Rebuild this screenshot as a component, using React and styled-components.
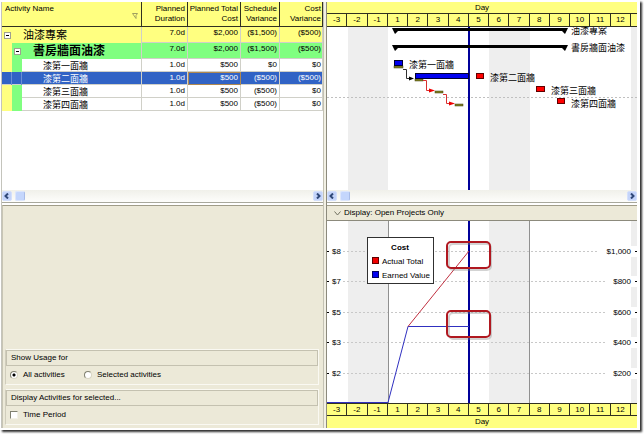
import * as React from 'react';
import styled, { createGlobalStyle } from "styled-components";

const days = ['-3', '-2', '-1', '1', '2', '3', '4', '5', '6', '7', '8', '9', '10', '11', '12'];

const activities = [
    { name: '油漆專案', level: 0, duration: '7.0d', cost: '$2,000', schedule: '($1,500)', variance: '($500)' },
    { name: '書房牆面油漆', level: 1, duration: '7.0d', cost: '$2,000', schedule: '($1,500)', variance: '($500)' },
    { name: '漆第一面牆', level: 2, duration: '1.0d', cost: '$500', schedule: '$0', variance: '$0' },
    { name: '漆第二面牆', level: 2, duration: '1.0d', cost: '$500', schedule: '($500)', variance: '($500)', selected: true },
    { name: '漆第三面牆', level: 2, duration: '1.0d', cost: '$500', schedule: '($500)', variance: '$0' },
    { name: '漆第四面牆', level: 2, duration: '1.0d', cost: '$500', schedule: '($500)', variance: '$0' },
];

const levels = [
    { height: 16, background: '#ffff80', size: 11, weight: 400, gap: 12 },
    { height: 16, background: '#80ff80', size: 12, weight: 700, gap: 12 },
    { height: 13, background: '#ffffff', size: 9, weight: 400, gap: 21 },
];

const grid = [
    { y: 30, left: '$8', right: '$1,000' },
    { y: 60, left: '$7', right: '$800' },
    { y: 91, left: '$5', right: '$600' },
    { y: 121, left: '$3', right: '$400' },
    { y: 152, left: '$2', right: '$200' },
];

const App = () => {
    return (
        <>
        <GlobalStyle />
        <Frame>
            <Window>
                <ActivityPane />
                <Splitter />
                <GanttPane />
                <UsagePane />
                <Splitter />
                <CostPane />
            </Window>
        </Frame>
        </>
    )
}

const ActivityPane = () => {
    return (
        <TopPane>
            <Table>
                <colgroup>
                    <col />
                    <Col $width={46} />
                    <Col $width={53} />
                    <Col $width={39} />
                    <Col $width={43} />
                </colgroup>
                <thead>
                    <tr>
                        <Th $left>
                            <HeadLine>
                                Activity Name
                                <FilterIcon viewBox="0 0 6 6"><path d="M.5.5h5L4 2.5V5.5z" /></FilterIcon>
                            </HeadLine>
                        </Th>
                        <Th>Planned Duration</Th>
                        <Th>Planned Total Cost</Th>
                        <Th>Schedule Variance</Th>
                        <Th>Cost Variance</Th>
                    </tr>
                </thead>
                <tbody>
                    {activities.map((a) => {
                        const level = levels[a.level];
                        return (
                            <Row key={a.name} $level={level} $selected={a.selected}>
                                <NameCell>
                                    <NameBox $height={level.height} $line={a.level > 1}>
                                        {a.level > 0 ? <Strip $color="#ffff80" $selected={a.selected} /> : null}
                                        {a.level > 1 ? <Strip $color="#80ff80" $selected={a.selected} /> : null}
                                        {a.level < 2 ? <Toggle aria-label="collapse"><i /></Toggle> : null}
                                        <Name $level={level}>{a.name}</Name>
                                    </NameBox>
                                </NameCell>
                                <Td>{a.duration}</Td>
                                <Td $focus={a.selected}>{a.cost}</Td>
                                <Td>{a.schedule}</Td>
                                <Td>{a.variance}</Td>
                            </Row>
                        )
                    })}
                </tbody>
            </Table>
            <ScrollBar />
        </TopPane>
    )
}

const ScrollBar = () => {
    return (
        <Track>
            <ScrollButton aria-label="scroll left"><svg viewBox="0 0 6 6"><path d="M4 .5L1.5 3 4 5.5" /></svg></ScrollButton>
            <Thumb />
            <ScrollButton aria-label="scroll right"><svg viewBox="0 0 6 6"><path d="M2 .5L4.500 3 2 5.5" /></svg></ScrollButton>
        </Track>
    )
}

const DayCells = () => {
    return (
        <Days>
            {days.map((d) => <Day key={d}>{d}</Day>)}
            <span />
        </Days>
    )
}

const GanttPane = () => {
    return (
        <TopPane>
            <AxisTitle $line="bottom">Day</AxisTitle>
            <DayCells />
            <Drawing viewBox="0 0 310 163">
                <Bands height={163} />
                <path d="M0 70.5H310" stroke="#c0c0c0" strokeDasharray="2 2" />
                <rect x="141" width="2" height="163" fill="#00009a" />

                {/* summary bars */}
                <path d="M65 1H241L238 7L235 4H71L68 7z" />
                <path d="M65 18H241L238 24L235 21H71L68 24z" />
                <text x="244" y="7">油漆專案</text>
                <text x="244" y="24">書房牆面油漆</text>

                {/* planned bars */}
                <g fill="#808020" stroke="#404010" strokeWidth=".5">
                    <rect x="67" y="39" width="9" height="2" />
                    <rect x="88" y="52" width="8" height="2" />
                    <rect x="108" y="64" width="8" height="2" />
                    <rect x="128" y="77" width="8" height="2" />
                </g>

                {/* actual bars */}
                <g fill="#0000f0" stroke="#000030">
                    <rect x="67.500" y="33.500" width="8" height="5" />
                    <rect x="88.500" y="46.500" width="53" height="5" />
                </g>
                <g fill="#ff0000" stroke="#600000">
                    <rect x="149.500" y="46.500" width="7" height="5" />
                    <rect x="209.500" y="59.500" width="8" height="5" />
                    <rect x="230.500" y="71.500" width="7" height="5" />
                </g>

                {/* links */}
                <path d="M76 42.500H79.500V51.500H83" fill="none" stroke="#303030" />
                <path d="M82 49.500L87 51.500L82 53.500z" />
                <g fill="none" stroke="#d83030">
                    <path d="M96 53.500H99.500V63.500H104" />
                    <path d="M116 67.500H119.500V76.500H124" />
                </g>
                <g fill="#f00000">
                    <path d="M102 61.500L108 63.500L102 65.500z" />
                    <path d="M122 74.500L128 76.500L122 78.500z" />
                </g>

                <text x="82" y="41">漆第一面牆</text>
                <text x="163" y="54">漆第二面牆</text>
                <text x="224" y="67">漆第三面牆</text>
                <text x="244" y="80">漆第四面牆</text>
            </Drawing>
            <ScrollBar />
        </TopPane>
    )
}

const Bands = ({ height }) => {
    return (
        <g fill="#eeeeee">
            <rect x="21" width="40" height={height} />
            <rect x="162" width="41" height={height} />
            <rect x="304" width="6" height={height} />
        </g>
    )
}

const UsagePane = () => {
    return (
        <BottomPane>
            <Group>
                <GroupTitle>Show Usage for</GroupTitle>
                <Options>
                    <Label $width={74}><Radio type="radio" name="usage" defaultChecked />All activities</Label>
                    <Label><Radio type="radio" name="usage" />Selected activities</Label>
                </Options>
            </Group>
            <Group>
                <GroupTitle>Display Activities for selected...</GroupTitle>
                <Options>
                    <Label><Check type="checkbox" />Time Period</Label>
                </Options>
            </Group>
        </BottomPane>
    )
}

const CostPane = () => {
    return (
        <ChartPane>
            <DisplayBar>
                <svg viewBox="0 0 7 5"><path d="M.5.5L3.500 4L6.500.5" /></svg>
                Display: Open Projects Only
            </DisplayBar>
            <Drawing viewBox="0 0 310 182">
                <Bands height={182} />
                {grid.map((g) => (
                    <g key={g.left}>
                        <path d={`M16 ${g.y}.5H304`} stroke="#c8c8c8" strokeDasharray="2 2" />
                        <rect x={g.y > 30 ? 278 : 272} y={g.y - 5} width={g.y > 30 ? 32 : 38} height="11" fill="#ffffff" />
                        <path d={`M0 ${g.y}.5H2M308 ${g.y}.5H310`} stroke="#000000" />
                        <text x="5" y={g.y + 3}>{g.left}</text>
                        <text x="304" y={g.y + 3} textAnchor="end">{g.right}</text>
                    </g>
                ))}
                <path d="M61.500 0V182M202.500 0V182" stroke="#909090" />
                <rect x="141" width="2" height="182" fill="#00009a" />
                <path d="M0 181.500H61L81 105.500H142" fill="none" stroke="#3030c0" />
                <path d="M81 105.500L142 30" fill="none" stroke="#c03040" />

                <rect x="40.500" y="16.500" width="66" height="46" fill="#ffffff" stroke="#303030" />
                <text x="73" y="29" textAnchor="middle" fontWeight="700">Cost</text>
                <rect x="45.500" y="36.500" width="6" height="6" fill="#f00000" stroke="#600000" />
                <rect x="45.500" y="50.500" width="6" height="6" fill="#0000f0" stroke="#000060" />
                <text x="55" y="43">Actual Total</text>
                <text x="55" y="57">Earned Value</text>

                {/* callouts */}
                <g fill="none" strokeWidth="2">
                    <g stroke="#808080" strokeOpacity=".35">
                        <rect x="122" y="23" width="42" height="26" rx="4" />
                        <rect x="122" y="92" width="42" height="26" rx="4" />
                    </g>
                    <g stroke="#b01820">
                        <rect x="120" y="21" width="43" height="26" rx="4" />
                        <rect x="120" y="90" width="43" height="26" rx="4" />
                    </g>
                </g>
            </Drawing>
            <DayCells />
            <AxisTitle $line="top">Day</AxisTitle>
        </ChartPane>
    )
}

export default App;


const GlobalStyle = createGlobalStyle`
    * {
        box-sizing: border-box;
    }
    body {
        margin: 0;
        background: #ffffff;
        color: #000000;
        font: 8px/10px "Liberation Sans", "Noto Sans CJK TC", sans-serif;
    }
    button {
        padding: 0;
        font: inherit;
    }
`;
const Frame = styled.div`
    margin: 0 4px 4px 0;
    padding: 2px 3px 2px 1px;
    background: #ffffff;
    box-shadow: 2px 2px 2px #303030;
`;
const Window = styled.div`
    display: grid;
    grid-template-columns: 321fr 4px 310fr;
    border-left: 1px solid #c4c4bc;
`;
const TopPane = styled.div`
    display: flex;
    flex-direction: column;
    min-width: 0;
    background: #ffffff;
    border-bottom: 1px solid #a8a89c;
`;
const BottomPane = styled.div`
    display: flex;
    flex-direction: column;
    justify-content: flex-end;
    gap: 4px;
    margin-top: 2px;
    padding: 3px 4px 3px 2px;
    background: #ece9d8;
    border-top: 1px solid #a09c88;
    border-left: 1px solid #c8c5b4;
`;
const ChartPane = styled.div`
    margin-top: 2px;
    background: #ffffff;
`;
const Splitter = styled.div`
    background: #f2f0e4;
    border-left: 1px solid #c4c2b4;
    border-right: 1px solid #8c8a7c;
`;
const Table = styled.table`
    width: 100%;
    table-layout: fixed;
    border-collapse: separate;
    border-spacing: 0;
`;
const Col = styled.col`
    width: ${(props) => props.$width}px;
`;
const Th = styled.th`
    height: 25px;
    padding: ${(props) => (props.$left ? '2px 3px' : '2px 2px 2px 0')};
    vertical-align: top;
    text-align: ${(props) => (props.$left ? 'left' : 'right')};
    font-weight: 400;
    background: #ffff80;
    border-right: 1px solid #303020;
    border-bottom: 1px solid #303020;

    &:last-child {
        padding-right: 1px;
    }
`;
const HeadLine = styled.div`
    display: flex;
    justify-content: space-between;
`;
const FilterIcon = styled.svg`
    width: 6px;
    height: 6px;
    align-self: flex-end;
    margin-top: 9px;
    fill: none;
    stroke: #a0a060;
`;
const Row = styled.tr`
    height: ${(props) => props.$level.height}px;
    background: ${(props) => (props.$selected ? '#3163c5' : props.$level.background)};
    color: ${(props) => (props.$selected ? '#ffffff' : '#000000')};
`;
const Td = styled.td`
    padding: 1px 2px 0 0;
    vertical-align: top;
    text-align: right;
    border-right: 1px solid #d0d0c8;
    border-bottom: 1px solid #d0d0c8;
    outline: ${(props) => (props.$focus ? '1px solid #b08850' : 'none')};
    outline-offset: -1px;

    &:last-child {
        padding-right: 1px;
    }
`;
const NameCell = styled.td`
    padding: 0;
    border-right: 1px solid #d0d0c8;
`;
const NameBox = styled.div`
    display: flex;
    align-items: center;
    height: ${(props) => props.$height}px;
    overflow: hidden;
    white-space: nowrap;
    box-shadow: ${(props) => (props.$line ? 'inset 0 -1px #d0d0c8' : 'none')};
`;
const Strip = styled.span`
    width: 10px;
    align-self: stretch;
    background: ${(props) => (props.$selected ? 'transparent' : props.$color)};
    border-right: ${(props) => (props.$selected ? '1px solid #6a8cd4' : 'none')};
`;
const Toggle = styled.button`
    display: flex;
    align-items: center;
    justify-content: center;
    width: 7px;
    height: 7px;
    margin-left: 2px;
    background: #ffffff;
    border: 1px solid #a0a090;

    i {
        width: 3px;
        height: 1px;
        background: #000000;
    }
`;
const Name = styled.span`
    flex: 1;
    margin-left: ${(props) => props.$level.gap}px;
    font-size: ${(props) => props.$level.size}px;
    font-weight: ${(props) => props.$level.weight};
    line-height: 12px;
`;
const Track = styled.div`
    display: flex;
    align-items: center;
    gap: 3px;
    height: 12px;
    margin-top: auto;
    background: linear-gradient(#f0f0ea, #fdfdfb);
`;
const ScrollButton = styled.button`
    display: flex;
    align-items: center;
    justify-content: center;
    width: 10px;
    height: 10px;
    background: #c4d4fa;
    border: 1px solid #d4e0fc;
    border-radius: 2px;

    &:last-child {
        margin-left: auto;
    }
    svg {
        width: 6px;
        height: 6px;
        fill: none;
        stroke: #304878;
        stroke-width: 2;
    }
`;
const Thumb = styled.div`
    width: 10px;
    height: 10px;
    background: #c4d6fc;
    border: 1px solid #dce6fc;
    border-right-color: #a8bce8;
    border-radius: 2px;
`;
const AxisTitle = styled.div`
    height: 12px;
    line-height: 12px;
    text-align: center;
    background: #ffff80;
    border-bottom: ${(props) => (props.$line === 'bottom' ? '1px solid #303020' : 'none')};
`;
const Days = styled.div`
    display: grid;
    grid-template-columns: repeat(15, 1fr) 6px;
    height: 13px;
    background: #ffff80;
    border-bottom: 1px solid #303020;

    ${() => ChartPane} & {
        border-top: 1px solid #303020;
    }
`;
const Day = styled.div`
    text-align: center;
    line-height: 12px;
    border-right: 1px solid #303020;
`;
const Drawing = styled.svg`
    display: block;
    width: 100%;
    height: auto;

    text {
        font-size: 8px;
        fill: #000000;
    }
    ${TopPane} & text {
        font-size: 9px;
    }
`;
const DisplayBar = styled.div`
    display: flex;
    align-items: center;
    gap: 3px;
    height: 16px;
    padding-left: 7px;
    background: #ece9d8;
    border-top: 1px solid #a09c88;
    border-bottom: 1px solid #8c8a7c;

    svg {
        width: 7px;
        height: 5px;
        fill: none;
        stroke: #707060;
    }
`;
const Group = styled.section`
    border: 1px solid #faf9f2;
    border-left-color: #d0cdbc;
`;
const GroupTitle = styled.div`
    height: 16px;
    padding-left: 4px;
    line-height: 14px;
    border: 1px solid #c4c1b0;
`;
const Options = styled.div`
    display: flex;
    align-items: center;
    height: 18px;
    padding-left: 4px;
`;
const Label = styled.label`
    display: flex;
    align-items: center;
    gap: 5px;
    width: ${(props) => (props.$width ? props.$width + 'px' : 'auto')};
    white-space: nowrap;
`;
const Radio = styled.input`
    appearance: none;
    width: 8px;
    height: 8px;
    margin: 0;
    background: #ffffff;
    border: 1px solid #808070;
    border-right-color: #d8d5c4;
    border-bottom-color: #d8d5c4;
    border-radius: 50%;

    &:checked {
        background: radial-gradient(circle, #000000 0 1px, #ffffff 2px);
    }
`;
const Check = styled.input`
    appearance: none;
    width: 8px;
    height: 8px;
    margin: 0;
    background: #ffffff;
    border: 1px solid #808070;
    border-right-color: #f4f2e8;
    border-bottom-color: #f4f2e8;
`;
